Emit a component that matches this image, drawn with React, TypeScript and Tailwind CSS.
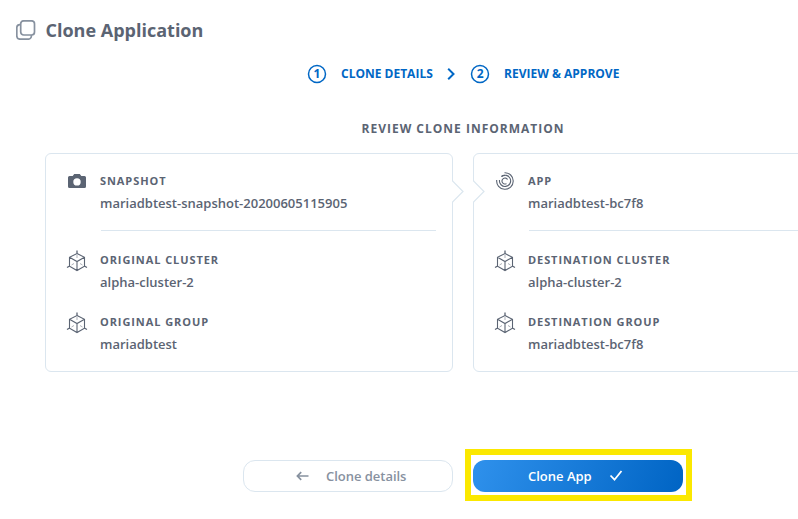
import React from "react";

function CloneIcon() {
  return (
    <svg width="20" height="20" viewBox="0 0 20 20" fill="none" stroke="#87919f" strokeWidth="1.7">
      <rect x="4.7" y="0.8" width="13.8" height="14.2" rx="3" />
      <path d="M4.8 4.6H4a3.2 3.2 0 0 0-3.2 3.2V16A3.2 3.2 0 0 0 4 19.2h8.2a3.2 3.2 0 0 0 3.2-3.2v-1" />
    </svg>
  );
}

function CameraIcon() {
  return (
    <svg width="20" height="20" viewBox="0 0 20 20" fill="#5b6473">
      <path
        fillRule="evenodd"
        d="M7.2 3h5.6l1.5 2H17.5a1.5 1.5 0 0 1 1.5 1.5v9a1.5 1.5 0 0 1-1.5 1.5H2.5a1.5 1.5 0 0 1-1.5-1.5v-9A1.5 1.5 0 0 1 2.5 5h3.2zM10 7.2a3.7 3.7 0 1 0 0 7.4a3.7 3.7 0 0 0 0-7.4z"
      />
    </svg>
  );
}

function SpiralIcon() {
  return (
    <svg width="20" height="20" viewBox="0 0 20 20" fill="none" stroke="#5b6473" strokeWidth="1.1">
      <path d="M9.5 1.7A8.3 8.3 0 1 1 1.7 9" />
      <path d="M6.5 5.500A5.600 5.600 0 1 1 4.500 9" />
      <path d="M6.500 5.500A5.600 5.600 0 0 1 10 4.400" />
      <path d="M12.600 8.600A3 3 0 1 0 11.500 12.600" />
    </svg>
  );
}

function CubeIcon() {
  return (
    <svg width="22" height="22" viewBox="0 0 22 22" fill="none" stroke="#5b6473" strokeWidth="1">
      <path d="M11 3.5l7.5 3.8v8.9L11 20.5l-7.500-4.300V7.300zM3.500 7.300L11 11.500l7.500-4.200M11 11.500v9" strokeWidth="1.1" />
      <path d="M11 0.5v3M1 17.500l2.700-1.500M21 17.500l-2.700-1.500" strokeWidth="1.3" />
      <path d="M11 5v3M5.500 15l2.500-1.500M16.500 15L14 13.500" opacity=".5" />
    </svg>
  );
}

function Step({ n, label }: { n: number; label: string }) {
  return (
    <div className="flex items-center gap-[15px]">
      <span className="relative flex size-[18px] items-center justify-center text-[12px] leading-none">
        <svg className="absolute inset-0 overflow-visible" width="18" height="18" viewBox="0 0 18 18" fill="none" stroke="currentColor" strokeWidth="1.5">
          <circle cx="9" cy="9" r="8.5" />
        </svg>
        {n}
      </span>
      <span>{label}</span>
    </div>
  );
}

function Field({ icon, label, value }: { icon: React.ReactNode; label: string; value: string }) {
  return (
    <div className="flex gap-3">
      <div className="flex h-5 w-[22px] shrink-0 items-center justify-center">{icon}</div>
      <div className="whitespace-nowrap">
        <div className="text-[11px] leading-5 font-bold tracking-[0.92px]">{label}</div>
        <div className="mt-[2px] text-[13px] leading-5 font-semibold">{value}</div>
      </div>
    </div>
  );
}

function ClusterField({ label, value }: { label: string; value: string }) {
  return <Field icon={<div className="pt-[2px]"><CubeIcon /></div>} label={label} value={value} />;
}

function Notch({ className }: { className: string }) {
  return (
    <svg className={"absolute top-[26px] " + className} width="12" height="23" viewBox="0 0 12 23" fill="white" stroke="#dbe6ef">
      <path d="M0 1.200h1v20.600H0z" stroke="none" />
      <path d="M0.500 0v1L11 11.500L0.500 22v1" strokeWidth="1.2" />
    </svg>
  );
}

export default function App() {
  return (
    <div className="flex h-[519px] w-[798px] flex-col overflow-hidden bg-white font-['Open_Sans',sans-serif] text-[#5b6473]">
      <header className="flex h-[60px] shrink-0 items-center gap-[9.5px] pl-4">
        <CloneIcon />
        <h1 className="text-[18px] font-bold">Clone Application</h1>
      </header>
      <nav className="flex h-7 shrink-0 items-center pl-[308px] text-[12px] font-bold whitespace-nowrap text-[#0067c5]">
        <Step n={1} label="CLONE DETAILS" />
        <svg className="mr-[16.3px] ml-[14px]" width="8" height="12" viewBox="0 0 8 12" fill="none" stroke="currentColor" strokeWidth="2">
          <path d="M1.200 0.800L6.500 6l-5.300 5.200" />
        </svg>
        <Step n={2} label="REVIEW & APPROVE" />
      </nav>
      <h2 className="mt-[31px] ml-[361.5px] h-[34px] shrink-0 text-[12px] leading-5 font-bold tracking-[1px] whitespace-nowrap">REVIEW CLONE INFORMATION</h2>
      <main className="flex shrink-0 gap-5 pl-[45px]">
        <section className="relative h-[219px] w-[408px] shrink-0 rounded-md border border-[#dbe6ef] pt-[17px] pr-4 pl-5">
          <Field icon={<CameraIcon />} label="SNAPSHOT" value="mariadbtest-snapshot-20200605115905" />
          <div className="mt-[17px] mb-[19px] ml-[35px] h-px bg-[#dbe6ef]" />
          <ClusterField label="ORIGINAL CLUSTER" value="alpha-cluster-2" />
          <div className="h-5" />
          <ClusterField label="ORIGINAL GROUP" value="mariadbtest" />
          <Notch className="-right-[12px]" />
        </section>
        <section className="relative h-[219px] w-[408px] shrink-0 rounded-md border border-[#dbe6ef] pt-[17px] pr-4 pl-5">
          <Field icon={<SpiralIcon />} label="APP" value="mariadbtest-bc7f8" />
          <div className="mt-[17px] mb-[19px] ml-[35px] h-px bg-[#dbe6ef]" />
          <ClusterField label="DESTINATION CLUSTER" value="alpha-cluster-2" />
          <div className="h-5" />
          <ClusterField label="DESTINATION GROUP" value="mariadbtest-bc7f8" />
          <Notch className="-left-px" />
        </section>
      </main>
      <footer className="mt-[77px] flex shrink-0 items-start gap-3 pl-[243px] text-[13px] font-semibold">
        <button className="mt-[11px] flex h-8 w-[210px] items-center rounded-xl border border-[#dbe6ef] pl-[52px] text-[#87919f]">
          <svg width="13" height="10" viewBox="0 0 13 10" fill="none" stroke="currentColor" strokeWidth="1.7">
            <path d="M12.500 5H1.500M5.200 1.200L1.400 5l3.800 3.800" />
          </svg>
          <span className="ml-[17px] pt-px tracking-[-0.03px]">Clone details</span>
        </button>
        <div className="h-[52px] w-[227px] border-6 border-[#fbe800] px-[2px] py-[5px]">
          <button className="flex h-8 w-[210px] items-center rounded-xl bg-linear-[110deg] from-[#2f91ec] to-[#0064c4] pl-[55px] text-white">
            <span className="pt-px">Clone App</span>
            <svg className="ml-[17px]" width="14" height="12" viewBox="0 0 14 12" fill="none" stroke="currentColor" strokeWidth="1.8">
              <path d="M1.500 5.500l4 4.200L12.500 1" />
            </svg>
          </button>
        </div>
      </footer>
    </div>
  );
}
